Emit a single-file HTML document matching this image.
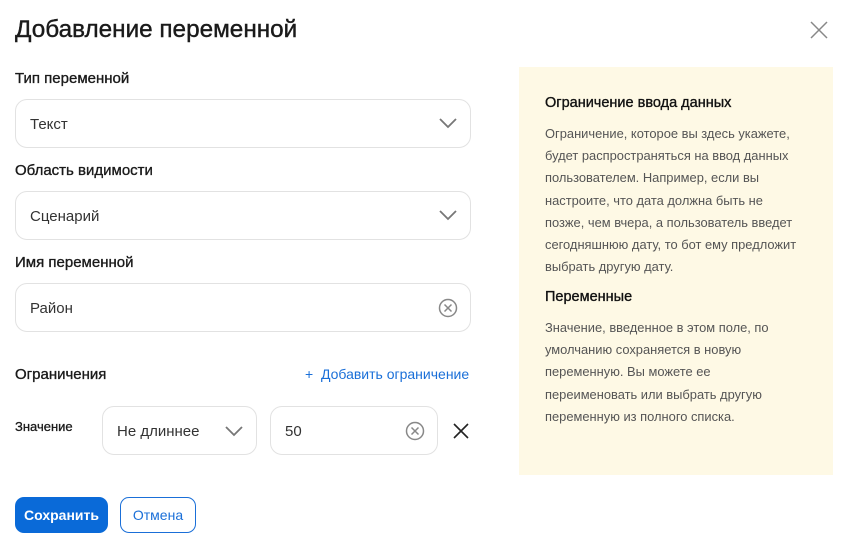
<!DOCTYPE html><html><head><meta charset="utf-8"><style>
body{margin:0;width:844px;height:545px;background:#fff;font-family:"Liberation Sans",sans-serif;color:#1a1a1a;position:relative;overflow:hidden}
.a{position:absolute}
.t{left:15px;top:16px;font-size:24.3px;-webkit-text-stroke:0.4px #1a1a1a}
.lbl{font-size:15px;left:15px;-webkit-text-stroke:0.35px #1a1a1a}
.in{box-sizing:border-box;border:1.5px solid #e2e2e2;border-radius:12px;background:#fff;font-size:15px;color:#333;padding-left:14px;display:flex;align-items:center;padding-top:2px}
.p{left:519px;top:67px;width:314px;height:408px;background:#fef9e5}
.p h3{margin:0;position:absolute;left:26px;font-size:14.5px;font-weight:normal;-webkit-text-stroke:0.35px #111;color:#111}
.p div{position:absolute;left:26px;width:290px;font-size:12.9px;line-height:22.2px;color:#555;white-space:nowrap}
svg{position:absolute}
</style></head><body>
<div class="a t">Добавление переменной</div>
<svg style="left:810px;top:21px" width="18" height="18" viewBox="0 0 18 18"><path d="M1 1L17 17M17 1L1 17" stroke="#888" stroke-width="1.5"/></svg>
<div class="a lbl" style="top:70px">Тип переменной</div>
<div class="a in" style="left:15px;top:99px;width:456px;height:49px">Текст</div>
<svg style="left:439px;top:117px" width="18" height="12" viewBox="0 0 18 12"><path d="M1 2L9 10L17 2" stroke="#777" stroke-width="1.8" fill="none"/></svg>
<div class="a lbl" style="top:162px">Область видимости</div>
<div class="a in" style="left:15px;top:191px;width:456px;height:49px">Сценарий</div>
<svg style="left:439px;top:209px" width="18" height="12" viewBox="0 0 18 12"><path d="M1 2L9 10L17 2" stroke="#777" stroke-width="1.8" fill="none"/></svg>
<div class="a lbl" style="top:254px">Имя переменной</div>
<div class="a in" style="left:15px;top:283px;width:456px;height:49px">Район</div>
<svg style="left:438px;top:298px" width="20" height="20" viewBox="0 0 20 20"><circle cx="10" cy="10" r="8.5" stroke="#888" stroke-width="1.5" fill="none"/><path d="M6.5 6.5L13.5 13.5M13.5 6.5L6.5 13.5" stroke="#888" stroke-width="1.5"/></svg>
<div class="a lbl" style="top:366px">Ограничения</div>
<div class="a" style="left:305px;top:366px;font-size:14px;color:#1a6fd8">+&nbsp; Добавить ограничение</div>
<div class="a" style="left:15px;top:419px;font-size:13px;-webkit-text-stroke:0.3px #1a1a1a">Значение</div>
<div class="a in" style="left:102px;top:406px;width:155px;height:49px">Не длиннее</div>
<svg style="left:225px;top:425px" width="18" height="12" viewBox="0 0 18 12"><path d="M1 2L9 10L17 2" stroke="#777" stroke-width="1.8" fill="none"/></svg>
<div class="a in" style="left:270px;top:406px;width:168px;height:49px">50</div>
<svg style="left:405px;top:421px" width="20" height="20" viewBox="0 0 20 20"><circle cx="10" cy="10" r="8.5" stroke="#888" stroke-width="1.5" fill="none"/><path d="M6.5 6.5L13.5 13.5M13.5 6.5L6.5 13.5" stroke="#888" stroke-width="1.5"/></svg>
<svg style="left:453px;top:423px" width="16" height="16" viewBox="0 0 16 16"><path d="M1 1L15 15M15 1L1 15" stroke="#222" stroke-width="1.6"/></svg>
<div class="a" style="left:15px;top:497px;width:93px;height:36px;background:#0a6ad8;border-radius:9px;color:#fff;font-size:14px;font-weight:bold;display:flex;align-items:center;justify-content:center">Сохранить</div>
<div class="a" style="left:120px;top:497px;width:76px;height:36px;box-sizing:border-box;border:1.5px solid #1a6fd8;border-radius:9px;color:#1a6fd8;font-size:14px;display:flex;align-items:center;justify-content:center">Отмена</div>
<div class="a p">
<h3 style="top:28px">Ограничение ввода данных</h3>
<div style="top:56px">Ограничение, которое вы здесь укажете,<br>будет распространяться на ввод данных<br>пользователем. Например, если вы<br>настроите, что дата должна быть не<br>позже, чем вчера, а пользователь введет<br>сегодняшнюю дату, то бот ему предложит<br>выбрать другую дату.</div>
<h3 style="top:222px">Переменные</h3>
<div style="top:250px">Значение, введенное в этом поле, по<br>умолчанию сохраняется в новую<br>переменную. Вы можете ее<br>переименовать или выбрать другую<br>переменную из полного списка.</div>
</div>
</body></html>
